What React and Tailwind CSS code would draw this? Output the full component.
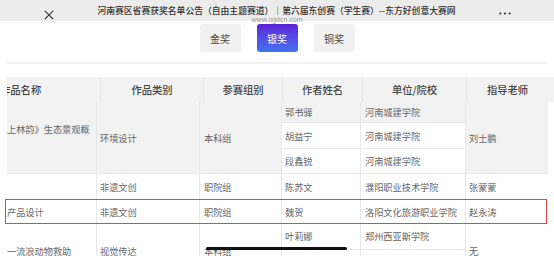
import React from "react";

const font = { fontFamily: '"Noto Sans CJK SC", "Noto Sans", sans-serif' };

function Cell({ children, className = "" }) {
  return (
    <div className={`flex items-center overflow-hidden whitespace-nowrap pl-[3px] border-l border-[#e8e8e8] ${className}`}>
      {children}
    </div>
  );
}

function SubRow({ name, school, className = "" }) {
  return (
    <div className={`flex ${className}`}>
      <Cell className="w-[79px]">{name}</Cell>
      <Cell className="w-[105px] pl-[4px]">{school}</Cell>
    </div>
  );
}

export default function App() {
  const headers = [
    ["作品名称", "w-[93px]"],
    ["作品类别", "w-[103px]"],
    ["参赛组别", "w-[79px]"],
    ["作者姓名", "w-[80px]"],
    ["单位/院校", "w-[104px]"],
    ["指导老师", "w-[82px]"],
  ];

  return (
    <div className="relative w-[554px] h-[256px] overflow-hidden bg-white" style={font}>
      {/* top bar */}
      <div className="flex items-start h-[21px] bg-[#ececec]">
        <svg className="ml-[44px] mt-[10px]" width="10" height="10" viewBox="0 0 10 10">
          <path d="M0.8 0.8 L9.2 9.2 M9.2 0.8 L0.8 9.2" stroke="#333" strokeWidth="1.1" />
        </svg>
        <div className="flex-1 text-center mt-[4px] text-[8.8px] leading-[14px] font-medium text-[#333] whitespace-nowrap">
          河南赛区省赛获奖名单公告（自由主题赛道）｜第六届东创赛（学生赛）--东方好创意大赛网
        </div>
        <svg className="mr-[43px] mt-[12px]" width="12" height="3" viewBox="0 0 12 3">
          <circle cx="1.3" cy="1.5" r="1.1" fill="#333" />
          <circle cx="6" cy="1.5" r="1.1" fill="#333" />
          <circle cx="10.7" cy="1.5" r="1.1" fill="#333" />
        </svg>
      </div>
      <div className="absolute left-0 right-0 top-[15px] text-center text-[7px] leading-[9px] text-[#999] font-['Liberation_Sans']">
        www.ogdcn.com
      </div>

      {/* award tabs */}
      <div className="flex justify-center gap-[16px] mt-[3px]">
        <div className="w-[41px] h-[28px] rounded-[3px] bg-[#f1f1f1] flex items-center justify-center text-[10px] text-[#444]">金奖</div>
        <div className="w-[41px] h-[28px] rounded-[3px] bg-gradient-to-b from-[#5a1ed4] to-[#3d72f2] flex items-center justify-center text-[10px] text-white">银奖</div>
        <div className="w-[41px] h-[28px] rounded-[3px] bg-[#f1f1f1] flex items-center justify-center text-[10px] text-[#444]">铜奖</div>
      </div>

      <div className="mx-[7px] mt-[10px] h-[2px] bg-[#f1f1f1]" />

      {/* table header */}
      <div className="ml-[7px] mt-[13px] flex h-[25px] bg-[#f2f2f2] text-[10.3px] font-medium text-[#444]">
        {headers.map(([t, w], i) => (
          <div
            key={t}
            className={`${w} flex items-center overflow-hidden whitespace-nowrap ${i === 0 ? "" : "justify-center border-l border-[#e4e4e4]"}`}
          >
            <span className={i === 0 ? "ml-[-7px]" : ""}>{t}</span>
          </div>
        ))}
      </div>

      {/* table body */}
      <div className="ml-[7px] w-[541px] text-[9.2px] text-[#666] leading-[14px]">
        <div className="flex h-[71px] bg-[#f2f2f2]">
          <div className="w-[89px] overflow-hidden whitespace-nowrap pt-[20px]">上林韵》生态景观概</div>
          <Cell className="w-[103px]">环境设计</Cell>
          <Cell className="w-[82px] pl-[4px]">本科组</Cell>
          <div className="flex flex-col">
            <SubRow name="郭书驿" school="河南城建学院" className="h-[20px]" />
            <SubRow name="胡益宁" school="河南城建学院" className="h-[26px] bg-white border-t border-[#e8e8e8]" />
            <SubRow name="段鑫锐" school="河南城建学院" className="h-[25px] bg-white border-t border-[#e8e8e8]" />
          </div>
          <Cell className="w-[83px]">刘士鹏</Cell>
        </div>

        <div className="flex h-[26px] border-t border-[#e8e8e8]">
          <div className="w-[89px]" />
          <Cell className="w-[103px]">非遗文创</Cell>
          <Cell className="w-[82px] pl-[4px]">职院组</Cell>
          <SubRow name="陈苏文" school="濮阳职业技术学院" />
          <Cell className="w-[83px]">张蒙蒙</Cell>
        </div>

        <div className="flex h-[24px] border-t border-[#e8e8e8]">
          <div className="w-[89px] flex items-center">产品设计</div>
          <Cell className="w-[103px]">非遗文创</Cell>
          <Cell className="w-[82px] pl-[4px]">职院组</Cell>
          <SubRow name="魏贺" school="洛阳文化旅游职业学院" />
          <Cell className="w-[83px]">赵永涛</Cell>
        </div>

        <div className="flex h-[54px] border-t border-[#e8e8e8]">
          <div className="w-[89px] flex items-center whitespace-nowrap overflow-hidden">一流浪动物救助</div>
          <Cell className="w-[103px]">视觉传达</Cell>
          <Cell className="w-[82px] pl-[4px]">本科组</Cell>
          <div className="flex flex-col">
            <SubRow name="叶莉娜" school="郑州西亚斯学院" className="h-[25px]" />
            <SubRow name="" school="" className="h-[29px] border-t border-[#e8e8e8]" />
          </div>
          <Cell className="w-[83px]">无</Cell>
        </div>
      </div>

      {/* highlight box */}
      <div className="absolute left-[5px] top-[199px] w-[542px] h-[25px] border-[1.5px] border-[#e8453e]" />
      {/* pen stroke */}
      <div className="absolute left-[206px] top-[247px] w-[141px] h-[3px] rounded-full bg-[#111]" />
    </div>
  );
}
